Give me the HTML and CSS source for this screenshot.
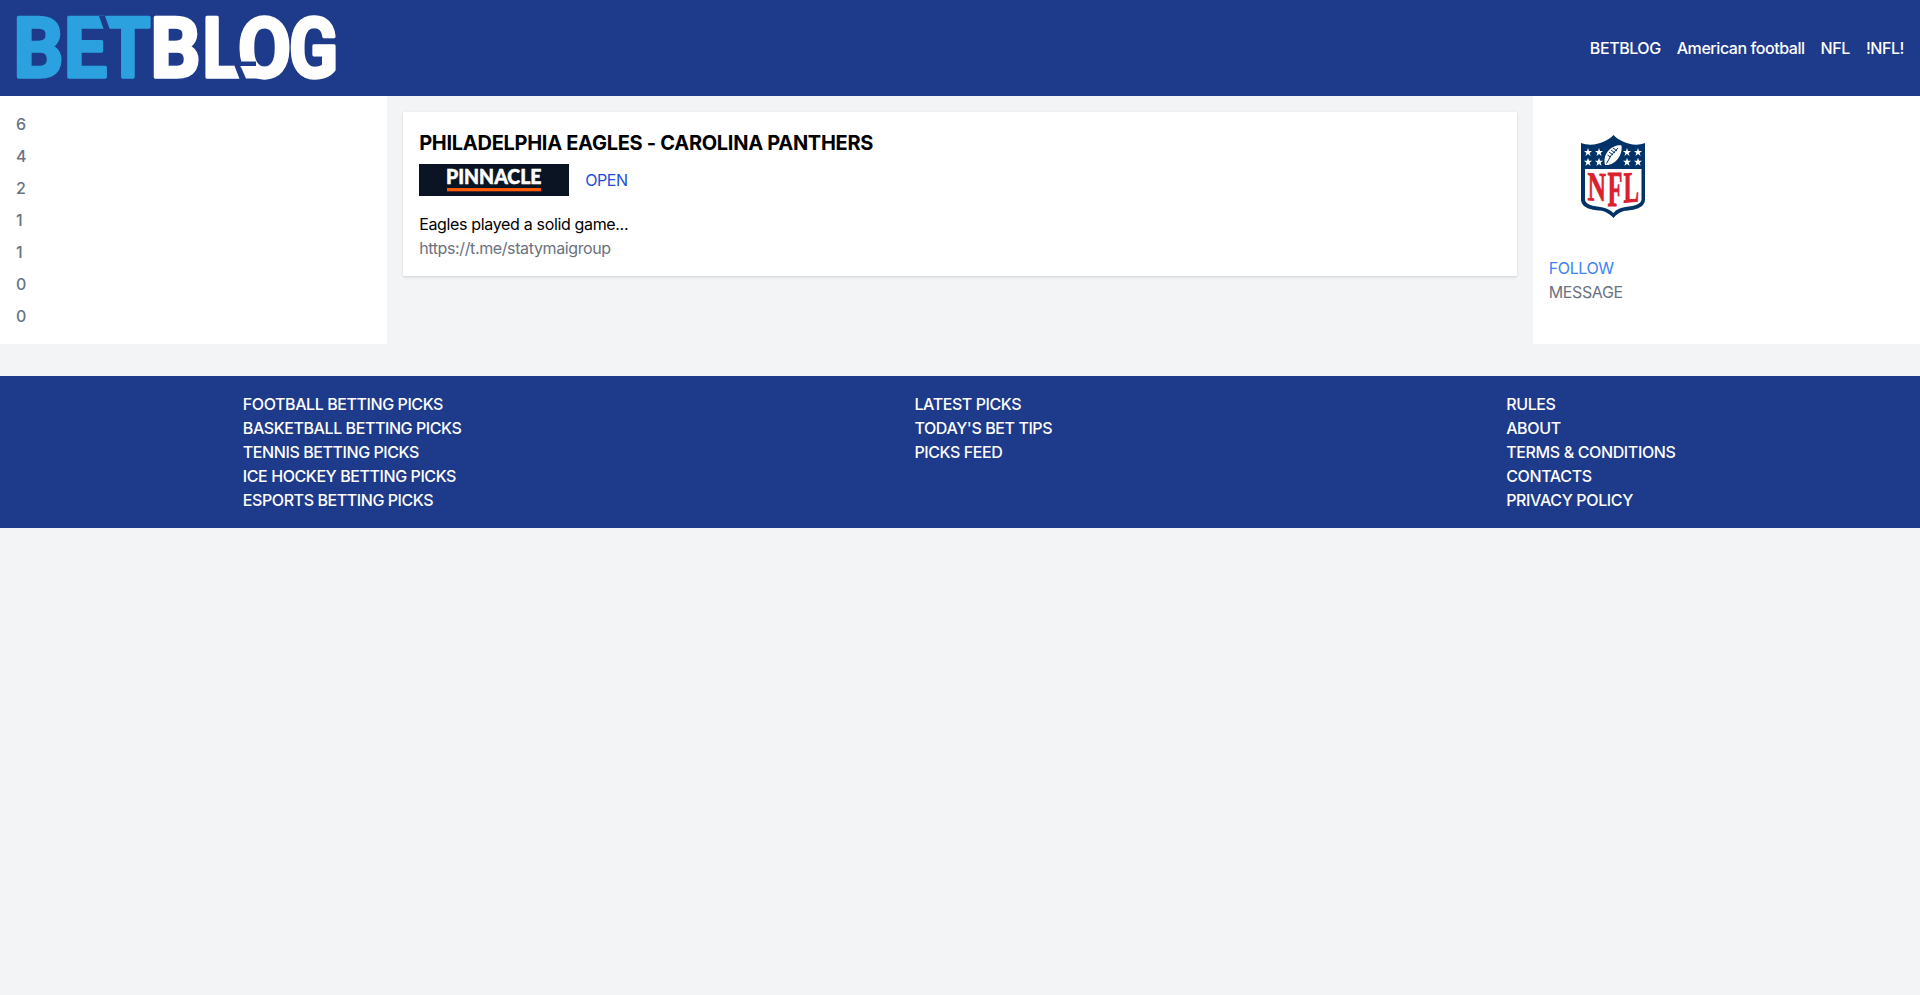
FILE: index.html
```html
<!DOCTYPE html>
<html lang="en">
<head>
<meta charset="utf-8">
<title>BETBLOG</title>
<link rel="stylesheet" href="styles.css">
</head>
<body>
<header class="header">
  <a class="brand">
    <svg class="brand-logo" viewBox="0 0 320 64" role="img" aria-label="BETBLOG">
      <g class="logo-blue">
        <text x="-2.500" y="60.800" textLength="50" lengthAdjust="spacingAndGlyphs">B</text>
        <text x="48" y="60.800" textLength="43" lengthAdjust="spacingAndGlyphs">E</text>
        <text x="89.500" y="60.800" textLength="45" lengthAdjust="spacingAndGlyphs">T</text>
      </g>
      <g class="logo-white">
        <text x="134.500" y="60.800" textLength="50" lengthAdjust="spacingAndGlyphs">B</text>
        <text x="186.500" y="60.800" textLength="38" lengthAdjust="spacingAndGlyphs">L</text>
        <text x="222" y="60.800" textLength="53" lengthAdjust="spacingAndGlyphs">O</text>
        <text x="273" y="60.800" textLength="49" lengthAdjust="spacingAndGlyphs">G</text>
      </g>
      <path class="logo-cut" d="M83 0h6l5 14h-6zM218.500 50l3-4.500H240V50H224l6 14h-6z"/>
      <path class="logo-foot" d="M224.500 50H243V62.500H230z"/>
    </svg>
  </a>
  <nav class="crumbs"><a>BETBLOG</a><a>American football</a><a>NFL</a><a>!NFL!</a></nav>
</header>
<main class="layout">
  <aside class="panel counts">
    <span>6</span><span>4</span><span>2</span><span>1</span><span>1</span><span>0</span><span>0</span>
  </aside>
  <section class="feed">
    <article class="card">
      <h1 class="card-title">PHILADELPHIA EAGLES - CAROLINA PANTHERS</h1>
      <div class="bookmaker">
        <svg class="banner" viewBox="0 0 150 32" role="img" aria-label="Pinnacle">
          <rect width="150" height="32" fill="#0a1423"/>
          <text class="banner-text" x="27" y="20.300" textLength="95.500" lengthAdjust="spacingAndGlyphs">PINNACLE</text>
          <rect x="28" y="24" width="94" height="3.300" fill="#ff5a00"/>
        </svg>
        <a class="open">OPEN</a>
      </div>
      <p class="text">Eagles played a solid game...</p>
      <a class="link">https://t.me/statymaigroup</a>
    </article>
  </section>
  <aside class="panel profile">
    <svg class="avatar" viewBox="0 0 128 128" role="img" aria-label="NFL">
      <path fill="#013369" d="M64.5 23C70 29 84 36 96 31V87C96 98 81 98 75 99C69 101 67 103 64.500 106C62 103 59 101 54 99C47 98 32 98 32 87V31C45 36 59 29 64.500 23Z"/>
      <path fill="#fff" d="M36 57H92.500V87C92.500 94 81 94 74 95.500C69 97 67 98 64.500 101C61 98 59 97 54 95.500C47 94 36 94 36 87Z"/>
      <g fill="#fff">
        <path id="star" d="M39 36l1 3h3l-2.400 2 1 3-2.600-1.900-2.600 1.900 1-3-2.400-2h3z"/>
        <use href="#star" x="11"/><use href="#star" x="39"/><use href="#star" x="50"/>
        <use href="#star" y="9.800"/><use href="#star" x="11" y="9.800"/><use href="#star" x="39" y="9.800"/><use href="#star" x="50" y="9.800"/>
        <path d="M72.500 33.500C63 32 53 42 56 53C66 54 74 43 72.500 33.500Z"/>
      </g>
      <path fill="none" stroke="#013369" stroke-width="1" d="M57.500 51.500Q61 43 69 36M60 40l4 3M62 38l4 3M64 36l4 3M58.500 43l3 2"/>
      <g class="nfl-text">
        <text transform="matrix(1 .06 0 1 38.500 88)" textLength="18.500" lengthAdjust="spacingAndGlyphs" font-size="41">N</text>
        <text x="58.500" y="94" textLength="15" lengthAdjust="spacingAndGlyphs" font-size="50">F</text>
        <text transform="matrix(1 -.08 0 1 74.500 90.500)" textLength="15.500" lengthAdjust="spacingAndGlyphs" font-size="44">L</text>
      </g>
    </svg>
    <a class="follow">FOLLOW</a>
    <a class="message">MESSAGE</a>
  </aside>
</main>
<footer class="footer">
  <nav class="links links-sports"><a>FOOTBALL BETTING PICKS</a><a>BASKETBALL BETTING PICKS</a><a>TENNIS BETTING PICKS</a><a>ICE HOCKEY BETTING PICKS</a><a>ESPORTS BETTING PICKS</a></nav>
  <nav class="links links-picks"><a>LATEST PICKS</a><a>TODAY'S BET TIPS</a><a>PICKS FEED</a></nav>
  <nav class="links links-info"><a>RULES</a><a>ABOUT</a><a>TERMS &amp; CONDITIONS</a><a>CONTACTS</a><a>PRIVACY POLICY</a></nav>
</footer>
</body>
</html>
```
FILE: styles.css
```css
* { box-sizing: border-box; }
body {
  margin: 0;
  background: #f3f4f6;
  color: #000;
  font: 400 16px/24px Inter, "Liberation Sans", sans-serif;
  letter-spacing: -0.34px;
}
h1, p { margin: 0; }
a { white-space: nowrap; }
.header {
  display: flex;
  align-items: center;
  justify-content: space-between;
  height: 96px;
  padding: 16px;
  background: #1e3a8a;
  color: #fff;
}
.brand, .brand-logo { display: block; width: 320px; height: 64px; }
.brand-logo, .avatar, .banner { overflow: visible; }
.brand-logo text {
  font: 700 82.5px Roboto, sans-serif;
  letter-spacing: 0;
  stroke-width: 3.5px;
  stroke-linejoin: round;
}
.logo-blue { fill: #2ca1df; stroke: #2ca1df; }
.logo-white { fill: #fff; stroke: #fff; }
.logo-cut { fill: #1e3a8a; }
.logo-foot { fill: #fff; }
.crumbs { display: flex; gap: 16px; font-weight: 500; letter-spacing: -0.44px; }
.layout {
  display: grid;
  grid-template-columns: 387.2px 1fr 387.2px;
  min-height: 248px;
}
.panel { background: #fff; color: #6b7280; }
.counts { display: flex; flex-direction: column; padding: 12px 16px; font-weight: 500; }
.counts span { padding: 4px 0; }
.feed { padding: 16px; }
.card {
  padding: 16px;
  background: #fff;
  box-shadow: 0 1px 3px rgba(0,0,0,.1), 0 1px 2px rgba(0,0,0,.06);
}
.card-title {
  margin-bottom: 7px;
  padding-top: 1px;
  font-size: 20px;
  line-height: 28px;
  font-weight: 700;
  letter-spacing: -0.29px;
}
.bookmaker { display: flex; align-items: center; gap: 16px; margin-bottom: 16px; }
.banner { display: block; width: 150px; height: 32px; }
.banner-text {
  fill: #fff;
  stroke: #fff;
  stroke-width: .5px;
  font: 900 20px Lato, sans-serif;
  letter-spacing: 0;
}
.open { color: #1d4ed8; letter-spacing: -0.45px; }
.link { display: block; color: #6b7280; letter-spacing: -0.38px; }
.profile { display: flex; flex-direction: column; padding: 16px; letter-spacing: -0.4px; }
.avatar { width: 128px; height: 128px; margin-bottom: 16px; }
.nfl-text {
  fill: #d9202c;
  stroke: #d9202c;
  stroke-width: .8px;
  font-family: "Liberation Serif", serif;
  font-weight: 700;
  letter-spacing: 0;
}
.follow { color: #3b82f6; }
.footer {
  display: flex;
  justify-content: space-around;
  margin-top: 32px;
  padding: 16px;
  background: #1e3a8a;
  color: #fff;
  font-weight: 500;
  letter-spacing: -0.42px;
}
.links { display: flex; flex-direction: column; }
.links-sports { width: 218px; }
.links-picks { width: 138px; }
.links-info { width: 171px; letter-spacing: -0.36px; }
```
